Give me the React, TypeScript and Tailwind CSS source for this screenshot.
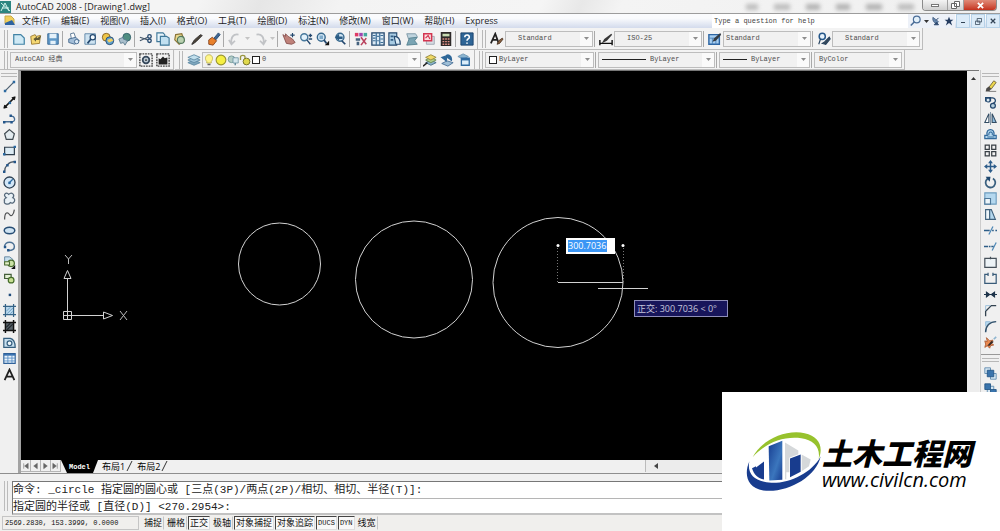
import React from 'react';

const NAVY = '#24486e';
const SKY = '#b5d8ef';

// All toolbar glyphs live on a 16x16 grid.
const glyphs: Record<string, React.ReactNode> = {
  New: <path d="M2 3h8l4 4v7H2z" fill="#cfe9f5" stroke="#4283a5" strokeWidth="1.4" />,
  Open: (
    <>
      <path d="M2 5l5-2 1 2 5-1-1 9-9 1z" fill="#f5d873" stroke="#98772c" />
      <path d="M5 8l4-3v2l5-3-2 5-4 0v2z" fill="#625a35" />
    </>
  ),
  Save: (
    <>
      <path d="M2 2h12v12H2z" fill="#5f98c7" stroke="#346594" />
      <path d="M4 2h8v5H4zM5 10h6v4H5z" fill="#e4f1fa" />
    </>
  ),
  Plot: (
    <>
      <path d="M4 2l4-1 2 6-5 1z" fill="#fff" stroke="#54718f" />
      <path d="M2 8l8-2 4 4-5 4-7-2z" fill="#a3bed8" stroke="#41668c" />
      <circle cx="11" cy="11" r="2.5" fill="#dbe9f5" stroke="#41668c" />
    </>
  ),
  Preview: (
    <>
      <path d="M1 2h12v12H1z" fill="#cee3f1" stroke="#5981a3" />
      <circle cx="10" cy="6" r="3" fill="#f5fbff" stroke={NAVY} strokeWidth="1.4" />
      <path d="M8 8l-4 5" stroke={NAVY} strokeWidth="2" />
    </>
  ),
  Publish: (
    <>
      <circle cx="6" cy="6" r="4.5" fill="#edc548" stroke="#805c21" />
      <circle cx="10" cy="10" r="4.5" fill="#62a3cf" stroke={NAVY} />
      <path d="M7 9l5-2 2 3-5 2z" fill="#f6d05f" />
    </>
  ),
  'DWF': (
    <>
      <circle cx="10" cy="6" r="4.5" fill="#4f8d80" stroke="#315f68" />
      <path d="M1 8l5-2v2l5 2-3 5-2-3-3 1z" fill="#a9bfcc" stroke="#5d7c90" />
    </>
  ),
  Cut: (
    <>
      <path d="M1 6l9 3M1 10l9-4" stroke="#44576a" strokeWidth="1.4" />
      <circle cx="12" cy="5" r="2" stroke={NAVY} fill="none" strokeWidth="1.5" />
      <circle cx="12" cy="10" r="2" stroke={NAVY} fill="none" strokeWidth="1.5" />
    </>
  ),
  Copy: (
    <>
      <path d="M1 1h7l2 2v8H1z" fill="#e7f4fb" stroke="#3f7899" strokeWidth="1.3" />
      <path d="M5 5h7l3 2v8H5z" fill="#c1e0f0" stroke="#3f7899" strokeWidth="1.3" />
    </>
  ),
  Paste: (
    <>
      <path d="M3 3l7-1 3 8-6 4-5-5z" fill="#ead88c" stroke="#8a7336" strokeWidth="1.3" />
      <circle cx="9" cy="9" r="4" fill="#bad1b0" stroke="#52795d" strokeWidth="1.3" />
    </>
  ),
  Match: <path d="M2 14l3-5 7-6 2 1-7 7-4 3z" fill="#4c4439" stroke="#2d2a2a" />,
  'Block Editor': (
    <>
      <path d="M8 7l5-6 2 2-5 6z" fill="#3f6793" stroke={NAVY} />
      <path d="M2 9l4-3 5 4-4 5-5-1z" fill="#e9812b" stroke="#83401a" />
    </>
  ),
  Undo: <path d="M12 3C6 2 3 6 4 13M1 9l3 5 4-4" fill="none" stroke="#c1c3c6" strokeWidth="2" />,
  Redo: <path d="M4 3c6-1 9 3 8 10M15 9l-3 5-4-4" fill="none" stroke="#c1c3c6" strokeWidth="2" />,
  Pan: (
    <>
      <path d="M1 3l3 2V2l3 3 5 3 3 4-4 2-6-1z" fill="#bf827a" stroke="#87504e" />
      <path d="M12 1v5M9.500 3.500h5" stroke={NAVY} strokeWidth="1.3" />
    </>
  ),
  'Zoom Realtime': (
    <>
      <circle cx="6" cy="6" r="4" fill="#e2f1fb" stroke="#47789c" strokeWidth="1.6" />
      <path d="M9 9l4 5M11 4h4M13 2v4M11 8h4" stroke={NAVY} strokeWidth="1.5" />
    </>
  ),
  'Zoom Window': (
    <>
      <circle cx="6" cy="6" r="4.500" fill="#d1e6f5" stroke="#38698e" strokeWidth="1.6" />
      <path d="M4 4h4v4H4z" fill="#7fabcb" />
      <path d="M9 9l3 4" stroke={NAVY} strokeWidth="2" />
      <path d="M15 10v5h-5z" fill="#111" />
    </>
  ),
  'Zoom Previous': (
    <>
      <circle cx="8" cy="6" r="4.500" fill="#d1e6f5" stroke="#38698e" strokeWidth="1.6" />
      <path d="M2 6l5-4v3h4v3H7v2z" fill="#2d5d85" />
      <path d="M10 10l4 4" stroke={NAVY} strokeWidth="2" />
    </>
  ),
  Properties: (
    <>
      <path d="M1 1h4v4H1z" fill="#df3a66" />
      <path d="M6 1h4v4H6z" fill="#9f47b0" />
      <path d="M11 1h4v4h-4z" fill="#44a89c" />
      <path d="M2 7h5v3H2zM3 11h3v4H3z" fill="#46637f" />
      <path d="M8 6l6 8M14 7l-6 8" stroke="#b9435e" strokeWidth="1.8" />
    </>
  ),
  'Design Center': (
    <>
      <path d="M1 1h14v14H1z" fill="#dbeaf5" stroke={NAVY} strokeWidth="1.5" />
      <path d="M6 1v14M10 1v14M2 4h3M2 7h3M2 10h3M11 4h3M11 8h3M11 12h3M7 5h2M7 10h2" stroke="#3d6e96" strokeWidth="1.4" />
    </>
  ),
  'Tool Palettes': (
    <>
      <path d="M1 1h9v14H1z" fill="#a9cce3" stroke={NAVY} strokeWidth="1.3" />
      <path d="M3 4h3v2H3zM3 8h3v2H3z" fill="#345f86" />
      <path d="M7 5c5 0 7 3 7 9H9z" fill="#dcecf6" stroke={NAVY} strokeWidth="1.3" />
    </>
  ),
  'Sheet Set': (
    <>
      <path d="M2 2h10l2 3-3 3H4z" fill="#bfd4de" stroke="#7894a2" />
      <path d="M5 7l9-1-3 4 3 4-12 1z" fill="#7aa4b3" stroke="#54808f" />
    </>
  ),
  Markup: (
    <>
      <path d="M5 5h9v9H5z" fill="#d7dde3" stroke="#9aa4ae" />
      <path d="M2 2h9v8H2z" fill="#fbdfe1" stroke="#d33550" strokeWidth="1.7" />
      <path d="M4 7l3-3 2 4" fill="none" stroke="#d33550" strokeWidth="1.3" />
    </>
  ),
  Calculator: (
    <>
      <path d="M2 0h12v16H2z" fill="#2d2928" />
      <path d="M4 2h8v3H4z" fill="#c7dab1" />
      <path d="M4 8h8M4 11h8M4 14h8" stroke="#dc8e84" strokeWidth="1.5" strokeDasharray="2 1" />
    </>
  ),
  Help: (
    <>
      <path d="M1 1h14v14H1z" fill="#2e6596" stroke="#173f68" />
      <path d="M5.500 6c0-4 6-3 5 .5-.5 1.500-2.500 1.500-2.500 3.500M8 12v1.500" fill="none" stroke="#fff" strokeWidth="1.9" />
    </>
  ),
  'Text Style': (
    <>
      <path d="M1 13L6 2l4 11M3 9h6" fill="none" stroke="#222" strokeWidth="2" />
      <path d="M8 14l2-4 4-3 1 1-4 5z" fill="#8b6240" stroke="#4a3424" />
    </>
  ),
  'Dimension Style': (
    <>
      <path d="M1 9v6M15 9v6M1 13h14" stroke="#111" strokeWidth="1.6" />
      <path d="M3 13l3-5 8-6 1 1-6 7z" fill="#383838" />
    </>
  ),
  'Table Style': (
    <>
      <path d="M1 3h12v11H1z" fill="#a9cff0" stroke="#2d65a3" strokeWidth="1.6" />
      <path d="M1 7h12M5 7v7M9 7v7" stroke="#4781bb" />
      <path d="M5 11l2-4 7-6 1 2-6 7z" fill="#343b43" />
    </>
  ),
  'Multileader Style': (
    <>
      <circle cx="6" cy="5" r="3.500" fill="#e7f2fb" stroke="#25578a" strokeWidth="1.7" />
      <path d="M4 8l-2 6M6 13l3-2 5-5 1 2-5 6z" stroke="#27435f" strokeWidth="1.3" fill="#384858" />
    </>
  ),
  Workspace: (
    <>
      <path d="M1 1h14v14H1z" fill="none" stroke="#444" strokeWidth="1.600" strokeDasharray="2 1" />
      <circle cx="8" cy="8" r="3.800" fill="#bcc9d3" stroke="#37495c" strokeWidth="2" />
      <circle cx="8" cy="8" r="1" fill="#222" />
    </>
  ),
  'My Workspace': (
    <>
      <path d="M1 1h14v14H1z" fill="none" stroke="#444" strokeWidth="1.600" strokeDasharray="2 1" />
      <path d="M3 13V6l2 1 3-3 2 2 3-1v8z" fill="#222" />
    </>
  ),
  Layers: (
    <>
      <path d="M1 11l7-3 7 3-7 3z" fill="#7ea6bd" stroke="#5f8aa5" />
      <path d="M1 8l7-3 7 3-7 3z" fill="#9fc4d8" stroke="#5f8aa5" />
      <path d="M1 5l7-3 7 3-7 3z" fill="#c2dfec" stroke="#5f8aa5" />
    </>
  ),
  'Layer Current': (
    <>
      <path d="M3 11l6-3 6 3-6 3z" fill="#8bb2c9" stroke="#466d85" />
      <path d="M3 8l6-3 6 3-6 3z" fill="#b2d08f" stroke="#6a8a4b" />
      <path d="M3 5l6-3 6 3-6 3z" fill="#efd965" stroke="#93843b" />
      <path d="M0 15l5-4" stroke="#222" strokeWidth="1.6" />
    </>
  ),
  'Layer Previous': (
    <>
      <path d="M2 12l6-3 7 2-6 4z" fill="#9dbed6" stroke="#466d95" />
      <path d="M13 9C14 3 9 0 6 4M2 5l5 4 1-6z" fill="#2e6798" stroke="#2e6798" strokeWidth="1.4" />
    </>
  ),
  'Layer States': (
    <>
      <path d="M1 4l6-3 6 3-6 3z" fill="#8ab4d0" stroke="#6c94b0" />
      <path d="M5 6h9v8H5z" fill="#dceefa" stroke="#2f6ba1" strokeWidth="1.5" />
      <path d="M5 7.500h9" stroke="#2f6ba1" strokeWidth="2" />
    </>
  ),
  Bulb: (
    <>
      <path d="M5 10C2 7 3 1 8 1s6 6 3 9v2H5z" fill="#fff68a" stroke="#b4a840" />
      <path d="M6 13h4v2H6z" fill="#666" />
    </>
  ),
  Sun: <circle cx="8" cy="8" r="6.500" fill="#f5ef43" stroke="#98942f" strokeWidth="1.5" />,
  Freeze: (
    <>
      <circle cx="6" cy="7" r="4.500" fill="#b3ccc6" stroke="#668e8e" />
      <path d="M8 5h7v7H8z" fill="#d4e6ec" stroke="#668e9e" />
      <path d="M11 12v3" stroke="#668e9e" strokeWidth="2" />
    </>
  ),
  Lock: (
    <>
      <path d="M2 8V4c0-3 6-3 6 0v3" fill="none" stroke="#99953f" strokeWidth="1.8" />
      <circle cx="10" cy="10" r="4.500" fill="#dfd84c" stroke="#77732b" strokeWidth="1.3" />
    </>
  ),
  Line: (
    <>
      <path d="M3 13L13 3" stroke="#4d5f70" strokeWidth="1.5" />
      <path d="M1 12h3v3H1zM12 1h3v3h-3z" fill="#2c6aa1" />
    </>
  ),
  'Construction Line': (
    <>
      <path d="M2 14L14 2" stroke="#151515" strokeWidth="1.8" />
      <path d="M1 15l1-4 3 3zM15 1l-4 1 3 3z" fill="#111" stroke="#111" />
      <path d="M7 7h3v3H7z" fill="#2c6aa1" />
    </>
  ),
  Polyline: (
    <>
      <path d="M2 12h9c5 0 4-7-1-7" fill="none" stroke="#456b92" strokeWidth="1.6" />
      <path d="M0 11h3v3H0zM9 11h3v3H9zM8 3h3v3H8z" fill="#24568a" />
    </>
  ),
  Polygon: <path d="M8 2l6 5-2 7H4L2 7z" fill="#e3ebef" stroke="#424c53" strokeWidth="1.5" />,
  Rectangle: (
    <>
      <path d="M2 4h12v9H2z" fill="#dcebf4" stroke="#303f4d" strokeWidth="1.5" />
      <path d="M0 11h3v3H0zM13 2h3v3h-3z" fill="#2c6aa1" />
    </>
  ),
  Arc: (
    <>
      <path d="M2 14C2 8 7 2 14 2" fill="none" stroke="#4b5865" strokeWidth="1.6" />
      <path d="M0 13h3v3H0zM4 5h3v3H4zM13 1h3v3h-3z" fill="#24568a" />
    </>
  ),
  Circle: (
    <>
      <circle cx="8" cy="8" r="6.800" fill="#d3e7f8" stroke="#2e4154" strokeWidth="1.6" />
      <path d="M8 8l4-4" stroke="#2c6aa1" strokeWidth="1.5" />
      <path d="M6.500 7h3v3h-3z" fill="#2c6aa1" />
    </>
  ),
  'Revision Cloud': (
    <path d="M4 7C-1 4 4-1 7 3c4-4 8 1 5 4 5 2 1 9-3 6-3 4-9 1-7-2-1-1 0-3 2-4z" fill="#e9f1f6" stroke="#55687a" strokeWidth="1.500" />
  ),
  Spline: <path d="M2 14C2 4 6 5 8 8s5 1 6-6" fill="none" stroke="#505254" strokeWidth="1.500" />,
  Ellipse: <ellipse cx="8" cy="8" rx="6.500" ry="4" fill="#cfe3f2" stroke="#274d74" strokeWidth="1.800" />,
  'Ellipse Arc': (
    <>
      <path d="M2 8c0-7 12-7 12 0 0 3-3 5-7 5" fill="none" stroke="#4b7093" strokeWidth="1.800" />
      <path d="M1 7h3v3H1zM5 11h3v3H5z" fill="#24568a" />
    </>
  ),
  'Insert Block': (
    <>
      <path d="M2 1h6l4 3v6H2z" fill="#c7dfee" stroke="#527895" />
      <circle cx="10" cy="9" r="4" fill="#cce3a6" stroke="#496b2d" strokeWidth="1.500" />
      <path d="M2 7h6v4H2z" fill="#e5f0c6" stroke="#496b2d" strokeWidth="1.300" />
      <path d="M15 11v5h-5z" fill="#111" />
    </>
  ),
  'Make Block': (
    <>
      <path d="M2 3h8v5H2z" fill="#e5f0d6" stroke="#455f3a" strokeWidth="1.500" />
      <circle cx="10" cy="10" r="3.500" fill="#c7df93" stroke="#456c2a" strokeWidth="1.500" />
    </>
  ),
  Point: <path d="M7 7h3v3H7z" fill="#1f4c7c" />,
  Hatch: (
    <>
      <path d="M3 3h10v10H3z" fill="#b9d8ee" />
      <path d="M3 0v16M13 0v16M0 3h16M0 13h16" stroke="#356387" strokeWidth="1.500" />
      <path d="M4 9l5-5M5 12l7-7M9 12l3-3" stroke="#5f94ba" />
    </>
  ),
  Gradient: (
    <>
      <path d="M3 3h10v10H3z" fill="#59636a" />
      <path d="M3 0v16M13 0v16M0 3h16M0 13h16" stroke="#111" strokeWidth="1.800" />
      <path d="M4 9l5-5M5 12l7-7" stroke="#23292e" strokeWidth="1.500" />
    </>
  ),
  Region: (
    <>
      <path d="M1 3h8c4 1 6 5 6 11H1z" fill="#c7dfef" stroke="#345e7e" strokeWidth="1.500" />
      <circle cx="8" cy="9" r="3" fill="#eff7fc" stroke="#345e7e" strokeWidth="1.500" />
    </>
  ),
  Table: (
    <>
      <path d="M1 2h14v12H1z" fill="#eaf4fc" stroke="#2f6098" strokeWidth="1.400" />
      <path d="M1 3.500h14" stroke="#356eae" strokeWidth="2" />
      <path d="M1 7.500h14M1 11h14M6 3v11M11 3v11" stroke="#5189c3" />
    </>
  ),
  'Multiline Text': <path d="M2 15L8 2l6 13M4.500 10.500h7" fill="none" stroke="#202020" strokeWidth="2.200" />,
  Erase: (
    <>
      <path d="M6 9l6-8 3 2-6 8z" fill="#ecd64e" stroke="#665b35" />
      <path d="M3 10l3-2 3 3-3 3-4 0z" fill="#4c4a48" />
      <path d="M6 14h9" stroke="#646464" />
    </>
  ),
  'Copy Object': (
    <>
      <path d="M2 2h6v4H2zM8 2c8 0 7 6 3 7" fill="none" stroke={NAVY} strokeWidth="1.500" />
      <circle cx="5" cy="5" r="2.500" fill="#dceaf3" stroke={NAVY} strokeWidth="1.300" />
      <circle cx="11" cy="12" r="3" fill="#b6cfde" stroke={NAVY} strokeWidth="1.500" />
    </>
  ),
  Mirror: (
    <>
      <path d="M6 2v11H1z" fill="#fff" stroke="#334c63" strokeWidth="1.300" />
      <path d="M10 2v11h5z" fill="#8ebbdd" stroke="#334c63" strokeWidth="1.300" />
      <path d="M8 0v16" stroke="#6c8499" />
    </>
  ),
  Offset: (
    <>
      <path d="M1 13h14v-4h-3c3-9-11-10-8 0H1z" fill="#b5d8ef" stroke="#336a9c" strokeWidth="1.500" />
      <path d="M4 11h9M6 9c-1-6 6-5 4 0" fill="none" stroke="#336a9c" strokeWidth="1.300" />
    </>
  ),
  Array: <path d="M1.500 1.500h5v5h-5zM9.500 1.500h5v5h-5zM1.500 9.500h5v5h-5zM9.500 9.500h5v5h-5z" fill="#f2f2f2" stroke="#383f45" strokeWidth="1.500" />,
  Move: (
    <>
      <path d="M8 2v12M2 8h12" stroke="#2c5c8a" strokeWidth="1.800" />
      <path d="M8 0l3 4H5zM8 16l3-4H5zM0 8l4-3v6zM16 8l-4-3v6z" fill="#2c5c8a" />
    </>
  ),
  Rotate: (
    <>
      <path d="M6 2.500a6 6 0 1 0 5 .5" fill="none" stroke="#3a607f" strokeWidth="2.200" />
      <path d="M2 1l6 0-1 6z" fill="#1d466d" />
    </>
  ),
  Scale: (
    <>
      <path d="M1 1h14v14H1z" fill={SKY} stroke="#6e9dbf" strokeWidth="1.400" />
      <path d="M1 8h7v7H1z" fill="#eef6fa" stroke="#4f7899" strokeWidth="1.400" />
    </>
  ),
  Stretch: (
    <>
      <path d="M2 2h5v12H2z" fill="#eef6fa" stroke="#40627d" strokeWidth="1.400" />
      <path d="M7 2h2l5 12H7z" fill={SKY} stroke="#40627d" strokeWidth="1.400" />
    </>
  ),
  Trim: (
    <>
      <path d="M0 8h7M10 8h2M14 8h2" stroke="#2d5d87" strokeWidth="1.600" />
      <path d="M6 13l5-10" stroke="#4d87b5" strokeWidth="1.500" />
    </>
  ),
  Extend: (
    <>
      <path d="M0 8h5M6 8h2M9 8h3" stroke="#2d5d87" strokeWidth="1.600" />
      <path d="M10 13l5-10" stroke="#4d87b5" strokeWidth="1.500" />
    </>
  ),
  'Break at Point': <path d="M1 3h14v11H1zM8 1v3" fill="#edf3f7" stroke="#46505a" strokeWidth="1.500" />,
  Break: <path d="M5 3H1v11h14V3h-4M5 1v4M11 1v4" fill="none" stroke="#385b79" strokeWidth="1.500" />,
  Join: <path d="M0 8h16M3 5l4 3-4 3zM13 5L9 8l4 3z" fill="#1e344a" stroke="#1e344a" strokeWidth="1.300" />,
  Chamfer: (
    <>
      <path d="M2 15V9l7-7h6" fill="none" stroke="#33424f" strokeWidth="1.600" />
      <path d="M2 8V2h6" fill="none" stroke="#8eb7d8" />
    </>
  ),
  Fillet: (
    <>
      <path d="M2 8V2h6" fill={SKY} stroke="#8eb7d8" />
      <path d="M2 15C2 7 7 2 15 2" fill="none" stroke="#33546f" strokeWidth="1.800" />
    </>
  ),
  Explode: (
    <>
      <path d="M1 6l3 1-1-5 4 4 4-1-2 4 3 2-4 1-1 3-3-3-3 2 1-4z" fill="#ec8a50" stroke="#a8562f" />
      <path d="M4 12l5-6 3 1-5 5z" fill="#3a2a24" />
      <path d="M12 4l3-3" stroke="#8fb6d0" strokeWidth="2" />
    </>
  ),
  'Bring to Front': (
    <>
      <path d="M1 1h7v7H1zM8 8h7v7H8z" fill="#d6e7f3" stroke="#5583a8" />
      <path d="M4 4h8v8H4z" fill="#3a74ac" stroke="#1f5182" />
    </>
  ),
  'Send to Back': (
    <>
      <path d="M4 4h8v8H4z" fill="#d6e7f3" stroke="#5583a8" />
      <path d="M1 1h7v7H1zM8 8h7v7H8z" fill="#3a74ac" stroke="#1f5182" />
    </>
  ),
  Search: (
    <>
      <circle cx="9" cy="6" r="4.500" fill="#e3f0fa" stroke="#4a6d98" strokeWidth="1.600" />
      <path d="M6 9l-5 5" stroke="#4a6d98" strokeWidth="2.200" />
    </>
  ),
  'Communication Center': (
    <>
      <path d="M3 2l9 7-3 3C4 11 2 7 3 2z" fill="#6686ac" stroke="#2f4a70" />
      <path d="M8 7l4-4M5 14h7l-3-4z" stroke="#2f4a70" strokeWidth="1.600" fill="#2f4a70" />
    </>
  ),
  Favorites: <path d="M8 1l2 5h5l-4 3 2 6-5-4-5 4 2-6-4-3h5z" fill="#243c60" />,
};

const Glyph = ({ name, className = 'size-3.5' }: { name: string; className?: string }) => (
  <svg viewBox="0 0 16 16" fill="none" className={`shrink-0 ${className}`} aria-hidden="true">
    {glyphs[name]}
  </svg>
);

const ToolButton = ({ name, size = 'size-[17px]', glyph }: { name: string; size?: string; glyph?: string }) => (
  <button type="button" aria-label={name} className={`flex shrink-0 items-center justify-center ${size}`}>
    <Glyph name={name} className={glyph} />
  </button>
);

const Grip = () => (
  <div className="mr-0.5 ml-1 flex h-[18px] shrink-0 gap-0.5">
    <div className="w-px bg-[#b8b8b8]" />
    <div className="w-px bg-[#b8b8b8]" />
  </div>
);

const GripRow = () => (
  <div className="flex w-full shrink-0 flex-col gap-0.5 px-px py-px">
    <div className="h-px bg-[#b8b8b8]" />
    <div className="h-px bg-[#b8b8b8]" />
  </div>
);

const Separator = () => <div className="mr-0.5 ml-px h-4 w-px shrink-0 bg-[#a9a9a9]" />;

const Caret = ({ className = 'text-[#8d8d8d]' }: { className?: string }) => (
  <svg viewBox="0 0 5 3" fill="currentColor" className={`h-[3px] w-[5px] shrink-0 ${className}`} aria-hidden="true">
    <path d="M0 0h5L2.500 3z" />
  </svg>
);

interface ComboProps {
  label: string;
  value: string;
  width: string;
  indent?: string;
  children?: React.ReactNode;
}

const Combo = ({ label, value, width, indent = 'pl-2', children }: ComboProps) => (
  <label className={`flex h-4 shrink-0 items-center border border-[#bdbdbd] bg-[#f1f1f1] ${width}`}>
    {children}
    <select
      aria-label={label}
      defaultValue={value}
      className={`h-full min-w-0 flex-1 appearance-none bg-transparent font-['Liberation_Mono','Noto_Sans_CJK_SC',monospace] text-[7px] text-[#4f4f4f] outline-none ${indent}`}
    >
      <option>{value}</option>
    </select>
    <span className="flex h-full w-3 shrink-0 items-center justify-center bg-[#fafafa]">
      <Caret />
    </span>
  </label>
);

const Toolbar = ({ children }: { children: React.ReactNode }) => (
  <div className="flex h-full shrink-0 items-center border-r border-b border-[#bcbcbc] bg-[#f3f3f3] pr-0.5">{children}</div>
);

const menus = ['文件(F)', '编辑(E)', '视图(V)', '插入(I)', '格式(O)', '工具(T)', '绘图(D)', '标注(N)', '修改(M)', '窗口(W)', '帮助(H)', 'Express'];

const drawTools = [
  'Line', 'Construction Line', 'Polyline', 'Polygon', 'Rectangle', 'Arc', 'Circle', 'Revision Cloud', 'Spline', 'Ellipse',
  'Ellipse Arc', 'Insert Block', 'Make Block', 'Point', 'Hatch', 'Gradient', 'Region', 'Table', 'Multiline Text',
];

const modifyTools = [
  'Erase', 'Copy Object', 'Mirror', 'Offset', 'Array', 'Move', 'Rotate', 'Scale', 'Stretch', 'Trim', 'Extend',
  'Break at Point', 'Break', 'Join', 'Chamfer', 'Fillet', 'Explode',
];

const statusToggles = [
  { label: '捕捉', on: false },
  { label: '栅格', on: false },
  { label: '正交', on: true },
  { label: '极轴', on: false },
  { label: '对象捕捉', on: true },
  { label: '对象追踪', on: true },
  { label: 'DUCS', on: true, mono: true },
  { label: 'DYN', on: true, mono: true },
  { label: '线宽', on: false },
];

const TitleBar = () => (
  <header className="relative flex h-[13px] shrink-0 items-center overflow-hidden bg-[linear-gradient(115deg,#f4f4f4_0%,#f4f4f4_20%,#e6e6e6_26%,#f3f3f3_34%,#f5f5f5_54%,#e8e8e8_58%,#f4f4f4_62%,#efefef_100%)]">
    <svg viewBox="0 0 12 12" className="size-3 shrink-0" aria-hidden="true">
      <path d="M0 0h11v12H0z" fill="#2c8580" />
      <path d="M1 10l4-8 4 8M2 7h7M1 2l9 8" fill="none" stroke="#d5f4ee" />
    </svg>
    <h1 className="ml-1 flex-1 text-[9px] leading-3 whitespace-nowrap text-[#222]">AutoCAD 2008 - [Drawing1.dwg]</h1>
    <div className="mr-2 flex gap-4 opacity-60 blur-[2px]">
      <div className="h-1.5 w-3 bg-[#999]" />
      <div className="h-1.5 w-4 bg-[#999]" />
      <div className="h-1.5 w-3.5 bg-[#888]" />
      <div className="h-1.5 w-3.5 bg-[#888]" />
      <div className="h-1.5 w-4 bg-[#888]" />
      <div className="h-1.5 w-4 bg-[#999]" />
    </div>
    <div className="mr-[3px] mb-0.5 flex h-[11px] self-start overflow-hidden rounded-b border border-t-0 border-[#8b8b8b]">
      <button type="button" aria-label="Minimize" className="flex w-[25px] items-center justify-center border-r border-[#a0a0a0] bg-linear-to-b from-[#f4f4f4] to-[#cfcfcf]">
        <span className="h-[3px] w-2 border border-[#777] bg-white" />
      </button>
      <button type="button" aria-label="Restore" className="flex w-4 items-center justify-center border-r border-[#a0a0a0] bg-linear-to-b from-[#f4f4f4] to-[#cfcfcf]">
        <svg viewBox="0 0 9 8" className="h-2 w-[9px]" fill="#fff" stroke="#666" aria-hidden="true">
          <path d="M3.500.5h5v5h-5zM.5 2.500h5v5h-5z" />
        </svg>
      </button>
      <button type="button" aria-label="Close" className="flex w-8 items-center justify-center bg-linear-to-b from-[#e08a78] to-[#c4301c]">
        <svg viewBox="0 0 8 8" className="size-[7px]" stroke="#fff" strokeWidth="2" aria-hidden="true">
          <path d="M1 1l6 6M7 1L1 7" />
        </svg>
      </button>
    </div>
  </header>
);

const MenuBar = () => (
  <nav className="flex h-[15px] shrink-0 items-center border-t border-[#9c9c9c] bg-linear-to-b from-[#fafbfd] from-30% to-[#d3dbec]">
    <svg viewBox="0 0 12 12" className="mr-1.5 ml-1 size-3 shrink-0" aria-hidden="true">
      <path d="M1 1h6l3 3v5H1z" fill="#f0cf5a" stroke="#c9a94a" />
      <path d="M1 8l7-3 3 5H1z" fill="#2d62a0" />
    </svg>
    <ul className="flex flex-1 gap-[11px] text-[9px] leading-3 whitespace-nowrap text-[#1d1d1d]">
      {menus.map((menu) => (
        <li key={menu}>
          <button type="button">{menu}</button>
        </li>
      ))}
    </ul>
    <input
      type="text"
      aria-label="Help search"
      placeholder="Type a question for help"
      className="h-full w-[196px] bg-white px-0.5 font-['Liberation_Mono',monospace] text-[7px] outline-none placeholder:text-[#444]"
    />
    <div className="flex h-full items-center bg-[#edf1f8]">
      <ToolButton name="Search" size="h-3 w-4" glyph="size-3" />
      <Caret className="text-[#333]" />
      <ToolButton name="Communication Center" size="h-3 w-[14px]" glyph="size-2.5" />
      <ToolButton name="Favorites" size="h-3 w-3" glyph="size-2.5" />
    </div>
    <div className="flex h-full gap-px pl-px">
      <button type="button" aria-label="Minimize drawing" className="flex w-3.5 items-end justify-center border border-[#b7d2e8] bg-[#dcebf8] pb-1">
        <span className="h-px w-1 bg-[#345]" />
      </button>
      <button type="button" aria-label="Restore drawing" className="flex w-3.5 items-center justify-center border border-[#b7d2e8] bg-[#dcebf8]">
        <svg viewBox="0 0 8 8" className="size-[7px]" fill="#dcebf8" stroke="#456" aria-hidden="true">
          <path d="M2.500.5h5v4h-5zM.5 3.500h5v4h-5z" />
        </svg>
      </button>
      <button type="button" aria-label="Close drawing" className="flex w-3.5 items-center justify-center border border-[#b7d2e8] bg-[#dcebf8]">
        <svg viewBox="0 0 8 8" className="size-1.5" stroke="#345" strokeWidth="1.600" aria-hidden="true">
          <path d="M1 1l6 6M7 1L1 7" />
        </svg>
      </button>
    </div>
  </nav>
);

const StandardToolbars = () => (
  <div className="flex h-[22px] shrink-0 overflow-hidden">
    <Toolbar>
      <Grip />
      {['New', 'Open', 'Save'].map((name) => <ToolButton key={name} name={name} />)}
      <Separator />
      {['Plot', 'Preview', 'Publish', 'DWF'].map((name) => <ToolButton key={name} name={name} />)}
      <Separator />
      {['Cut', 'Copy', 'Paste', 'Match', 'Block Editor'].map((name) => <ToolButton key={name} name={name} />)}
      <Separator />
      <ToolButton name="Undo" />
      <span className="flex w-2 justify-center"><Caret className="text-[#c4c4c4]" /></span>
      <ToolButton name="Redo" />
      <span className="flex w-2 justify-center"><Caret className="text-[#c4c4c4]" /></span>
      <Separator />
      {['Pan', 'Zoom Realtime', 'Zoom Window', 'Zoom Previous'].map((name) => <ToolButton key={name} name={name} />)}
      <Separator />
      {['Properties', 'Design Center', 'Tool Palettes', 'Sheet Set', 'Markup', 'Calculator'].map((name) => <ToolButton key={name} name={name} />)}
      <Separator />
      <ToolButton name="Help" />
    </Toolbar>
    <Toolbar>
      <Grip />
      <ToolButton name="Text Style" />
      <Combo label="Text style" value="Standard" width="w-[88px]" indent="pl-3" />
      <Separator />
      <ToolButton name="Dimension Style" />
      <Combo label="Dimension style" value="ISO-25" width="w-[88px]" indent="pl-3" />
      <Separator />
      <ToolButton name="Table Style" />
      <Combo label="Table style" value="Standard" width="w-[88px]" indent="pl-0.5" />
      <Separator />
      <ToolButton name="Multileader Style" />
      <Combo label="Multileader style" value="Standard" width="w-[88px]" indent="pl-3" />
    </Toolbar>
  </div>
);

const LayerToolbars = () => (
  <div className="flex h-[20px] shrink-0 overflow-hidden">
    <Toolbar>
      <Grip />
      <Combo label="Workspace" value="AutoCAD 经典" width="w-[127px]" indent="pl-1" />
      <ToolButton name="Workspace" />
      <ToolButton name="My Workspace" />
    </Toolbar>
    <div className="w-px shrink-0" />
    <Toolbar>
      <Grip />
      <ToolButton name="Layers" />
      <Combo label="Layer" value="0" width="w-[219px]" indent="pl-0.5">
        <Glyph name="Bulb" className="size-3" />
        <Glyph name="Sun" className="size-3" />
        <Glyph name="Freeze" className="size-3" />
        <Glyph name="Lock" className="size-3" />
        <span className="ml-px size-2 border border-[#222] bg-white" />
      </Combo>
      <ToolButton name="Layer Current" />
      <ToolButton name="Layer Previous" />
      <ToolButton name="Layer States" />
    </Toolbar>
    <Toolbar>
      <Grip />
      <Combo label="Color" value="ByLayer" width="w-[109px]" indent="pl-0.5">
        <span className="ml-[3px] size-2 border border-[#222] bg-white" />
      </Combo>
      <Separator />
      <Combo label="Linetype" value="ByLayer" width="w-[117px]" indent="pl-1">
        <span className="ml-[3px] h-px w-11 bg-[#222]" />
      </Combo>
      <Separator />
      <Combo label="Lineweight" value="ByLayer" width="w-[91px]" indent="pl-1">
        <span className="ml-[3px] h-px w-6 bg-[#222]" />
      </Combo>
      <Separator />
      <Combo label="Plot style" value="ByColor" width="w-[88px]" indent="pl-1" />
    </Toolbar>
  </div>
);

const DrawingCanvas = () => (
  <div className="relative min-h-0 flex-1 overflow-hidden bg-black">
    <svg className="absolute inset-0 size-full" fill="none" stroke="#d2d2d2" aria-hidden="true">
      <circle cx="258.500" cy="193" r="41" />
      <circle cx="393" cy="208.500" r="58.500" />
      <circle cx="537" cy="211.500" r="65" />
      <path d="M537 211.500h65M577 217.500h50" />
      <path d="M536.500 177v34M602.500 177v34" stroke="#777" strokeDasharray="1 2" />
      <circle cx="537" cy="174.500" r="1.500" fill="#fff" stroke="none" />
      <circle cx="602" cy="174.500" r="1.500" fill="#fff" stroke="none" />
      {/* UCS icon */}
      <path d="M42.500 240.500h8v8h-8zM46.500 248.500V208M42.500 244.500H82M43 207.500l3.500-8 3.500 8zM82.500 241l9 3.500-9 3.500z" />
      <path d="M44 184l3.500 4 3.500-4M47.500 188v5M99 240l7 9M106 240l-7 9" stroke="#bbb" />
    </svg>
    <label className="absolute top-[167px] left-[545px] flex h-4 w-[49px] items-center bg-white px-0.5">
      <input
        type="text"
        aria-label="Radius"
        defaultValue="300.7036"
        className="h-3 w-[39px] bg-[#3b96f5] text-[9px] leading-3 text-white outline-none"
      />
    </label>
    <output className="absolute top-[229px] left-[613px] flex h-[17px] w-[94px] items-center border border-[#8e8db8] bg-[#17155a] px-0.5 text-[9px] whitespace-nowrap text-[#c6c6dc]">
      正交: 300.7036 &lt; 0°
    </output>
  </div>
);

const Slash = () => (
  <svg viewBox="0 0 8 12" className="h-3 w-2 shrink-0" stroke="#333" aria-hidden="true">
    <path d="M7 1L2 11" />
  </svg>
);

const LayoutTabs = () => (
  <div className="flex h-[13px] shrink-0 bg-[#f0f0f0] text-[9px] leading-3">
    {['M3 2v6M8 2L4 5l4 3z', 'M7 2L3 5l4 3z', 'M3 2l4 3-4 3z', 'M7 2v6M2 2l4 3-4 3z'].map((d, i) => (
      <button key={d} type="button" aria-label={['First tab', 'Previous tab', 'Next tab', 'Last tab'][i]} className="h-3 border-r border-b border-[#b5b5b5]">
        <svg viewBox="0 0 10 10" className="h-2.5 w-[9px]" fill="#666" stroke="#666" strokeWidth="0.600" aria-hidden="true">
          <path d={d} />
        </svg>
      </button>
    ))}
    <button type="button" className="bg-black px-2 font-['Liberation_Mono',monospace] text-[7px] font-bold text-white [clip-path:polygon(0_0,100%_0,calc(100%-5px)_100%,6px_100%)]">
      Model
    </button>
    <button type="button" className="pl-1">布局1</button>
    <Slash />
    <button type="button" className="pl-1">布局2</button>
    <Slash />
    <div className="flex-1" />
    <div className="flex h-3 w-[334px] items-center border-l border-[#bbb] bg-[#ececec] pl-2">
      <svg viewBox="0 0 4 6" className="h-1.5 w-1" fill="#444" aria-hidden="true">
        <path d="M4 0v6L0 3z" />
      </svg>
    </div>
  </div>
);

const CommandWindow = () => (
  <section className="flex h-[42px] shrink-0 border-t border-[#8e8e8e] bg-[#f0f0f0] pt-[7px]">
    <div className="flex w-3 shrink-0 justify-center gap-0.5 pb-1">
      <div className="w-px bg-[#bbb]" />
      <div className="w-px bg-[#bbb]" />
    </div>
    <div className="flex flex-1 flex-col border-t border-b-2 border-l border-t-[#777] border-b-[#c2c2c2] border-l-[#777] bg-white font-['Liberation_Mono','Noto_Sans_CJK_SC',monospace] text-[11px] leading-4 whitespace-nowrap text-[#222]">
      <p className="h-4">命令: _circle 指定圆的圆心或 [三点(3P)/两点(2P)/相切、相切、半径(T)]:</p>
      <label className="flex flex-1 items-center border-t border-[#b5b5b5]">
        指定圆的半径或 [直径(D)] &lt;270.2954&gt;:
        <input type="text" className="ml-1 h-3 flex-1 bg-transparent outline-none" />
      </label>
    </div>
  </section>
);

const StatusBar = () => (
  <footer className="flex h-4 shrink-0 items-center bg-[#f0efed] text-[9px] leading-3 text-[#111]">
    <div className="mr-[3px] ml-0.5 flex h-3.5 w-[137px] items-center border border-[#c5c5c5] px-0.5 font-['Liberation_Mono',monospace] text-[7px]">
      2569.2830, 153.3999, 0.0000
    </div>
    {statusToggles.map(({ label, on, mono }) => (
      <button
        key={label}
        type="button"
        aria-pressed={on}
        className={`mr-px h-3.5 border px-px whitespace-nowrap ${mono ? "font-['Liberation_Mono',monospace] text-[7px]" : ''} ${on ? 'border-t-[#444] border-r-[#ddd] border-b-[#ddd] border-l-[#444] bg-[#f8f8f8]' : 'border-transparent border-r-[#c5c5c5]'}`}
      >
        {label}
      </button>
    ))}
  </footer>
);

const SiteBadge = () => (
  <a href="#civilcn" className="absolute right-0 bottom-0 flex h-[139px] w-[278px] items-center bg-white pl-6 text-black">
    <svg viewBox="318 120 228 182" className="h-[61px] w-[76px] shrink-0" aria-hidden="true">
      <defs>
        <linearGradient id="tower" x1="0" y1="0" x2="1" y2="1">
          <stop offset="0" stopColor="#173d91" />
          <stop offset="0.600" stopColor="#3b76bd" />
          <stop offset="1" stopColor="#173d91" />
        </linearGradient>
      </defs>
      <path d="M338 198C365 147 435 114 494 126 538 136 551 167 536 204 542 167 520 146 484 141 430 134 378 154 338 198z" fill="#97c22d" />
      <path d="M328 210C312 248 319 289 370 298 440 307 528 259 542 196 515 245 450 277 394 275 346 272 320 250 328 210z" fill="#183c8e" />
      <path d="M336 231l12-6v4l24-18v54c-17-3-30-14-36-34z" fill="#183c8e" />
      <path d="M386 165l41-16v117l-39 2z" fill="url(#tower)" />
      <path d="M435 154l40 24v11l-27 11v43h-9v21h-4z" fill="#d5d8da" />
      <path d="M450 202l32-12v52l-32 16z" fill="#183c8e" />
      <path d="M485 190l27 15-5 20-22 15z" fill="#d5d8da" />
    </svg>
    <div className="flex flex-col gap-1 whitespace-nowrap italic">
      <span className="font-['Noto_Sans_CJK_SC',sans-serif] text-[30px] leading-8 font-black">土木工程网</span>
      <span className="font-['Open_Sans',sans-serif] text-[20px] leading-4 font-medium">www.civilcn.com</span>
    </div>
  </a>
);

export default function App() {
  return (
    <div className="relative flex h-screen flex-col overflow-hidden bg-[#f0f0f0] font-['Open_Sans','Noto_Sans_CJK_SC',sans-serif]">
      <TitleBar />
      <MenuBar />
      <StandardToolbars />
      <LayerToolbars />
      <main className="flex min-h-0 flex-1">
        <aside className="flex w-[18px] shrink-0 flex-col items-center pt-0.5">
          <GripRow />
          {drawTools.map((name) => <ToolButton key={name} name={name} size="h-4 w-4" glyph="size-[13px]" />)}
        </aside>
        <div className="flex min-w-0 flex-1 flex-col border-t border-l-3 border-t-[#777] border-l-[#a3a3a3]">
          <div className="flex min-h-0 flex-1">
            <DrawingCanvas />
            <div className="flex w-3 shrink-0 justify-center bg-[#ededed] pt-1.5">
              <svg viewBox="0 0 5 3" className="h-[3px] w-[5px]" fill="#333" aria-hidden="true">
                <path d="M0 3h5L2.500 0z" />
              </svg>
            </div>
          </div>
          <LayoutTabs />
        </div>
        <aside className="ml-px flex w-5 shrink-0 flex-col items-center overflow-hidden border-l border-[#ccc] pt-0.5">
          <GripRow />
          {modifyTools.map((name) => <ToolButton key={name} name={name} size="h-4 w-4" glyph="size-[13px]" />)}
          <div className="mt-1 mb-0.5 h-px w-full shrink-0 bg-[#999]" />
          <GripRow />
          <div className="h-0.5 shrink-0" />
          <ToolButton name="Bring to Front" size="h-4 w-4" glyph="size-[13px]" />
          <ToolButton name="Send to Back" size="h-4 w-4" glyph="size-[13px]" />
        </aside>
      </main>
      <CommandWindow />
      <StatusBar />
      <SiteBadge />
    </div>
  );
}
